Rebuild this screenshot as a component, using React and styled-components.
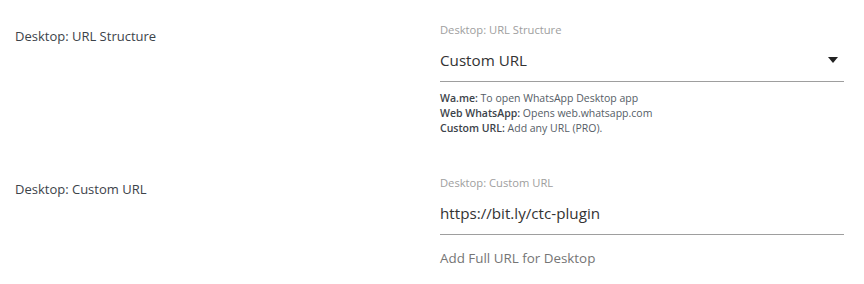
import React from "react";
import styled, { createGlobalStyle } from "styled-components";

const GlobalStyle = createGlobalStyle`
  body {
    margin: 0;
    background: #ffffff;
    font-family: "Open Sans", "Noto Sans", sans-serif;
  }
`;

const Page = styled.div`
  width: 864px;
  padding: 23px 20px 0 15px;
  box-sizing: border-box;
  display: flex;
  flex-direction: column;
  gap: 40px;
`;

const Row = styled.div`
  display: grid;
  grid-template-columns: 425px 1fr;
`;

const RowLabel = styled.div`
  padding-top: 4px;
  font-size: 13px;
  line-height: 18px;
  color: #3c434a;
`;

const Field = styled.div`
  display: flex;
  flex-direction: column;
`;

const FieldLabel = styled.div`
  font-size: 11.2px;
  line-height: 14px;
  color: #9e9e9e;
`;

const Control = styled.div`
  margin-top: 6px;
  height: 34px;
  padding-bottom: 4px;
  border-bottom: 1px solid #9e9e9e;
  display: flex;
  align-items: center;
  justify-content: space-between;
  font-size: 15.2px;
  color: #333333;
`;

const Caret = styled.svg`
  width: 10px;
  height: 6px;
  margin-right: 6px;
`;

const HelpList = styled.div`
  margin-top: 9px;
  font-size: 10.5px;
  line-height: 15px;
  color: #555d66;

  b {
    font-weight: 600;
    color: #3c434a;
  }
`;

const HelpText = styled.div`
  margin-top: 14px;
  font-size: 13.4px;
  line-height: 18px;
  color: #757575;
`;

export default function App() {
  return (
    <>
      <GlobalStyle />
      <Page>
        <Row>
          <RowLabel>Desktop: URL Structure</RowLabel>
          <Field>
            <FieldLabel>Desktop: URL Structure</FieldLabel>
            <Control>
              <span>Custom URL</span>
              <Caret viewBox="0 0 10 6">
                <path d="M0 0 H10 L5 6 Z" fill="#222" />
              </Caret>
            </Control>
            <HelpList>
              <div><b>Wa.me:</b> To open WhatsApp Desktop app</div>
              <div><b>Web WhatsApp:</b> Opens web.whatsapp.com</div>
              <div><b>Custom URL:</b> Add any URL (PRO).</div>
            </HelpList>
          </Field>
        </Row>
        <Row>
          <RowLabel>Desktop: Custom URL</RowLabel>
          <Field>
            <FieldLabel>Desktop: Custom URL</FieldLabel>
            <Control>
              <span>https://bit.ly/ctc-plugin</span>
            </Control>
            <HelpText>Add Full URL for Desktop</HelpText>
          </Field>
        </Row>
      </Page>
    </>
  );
}
